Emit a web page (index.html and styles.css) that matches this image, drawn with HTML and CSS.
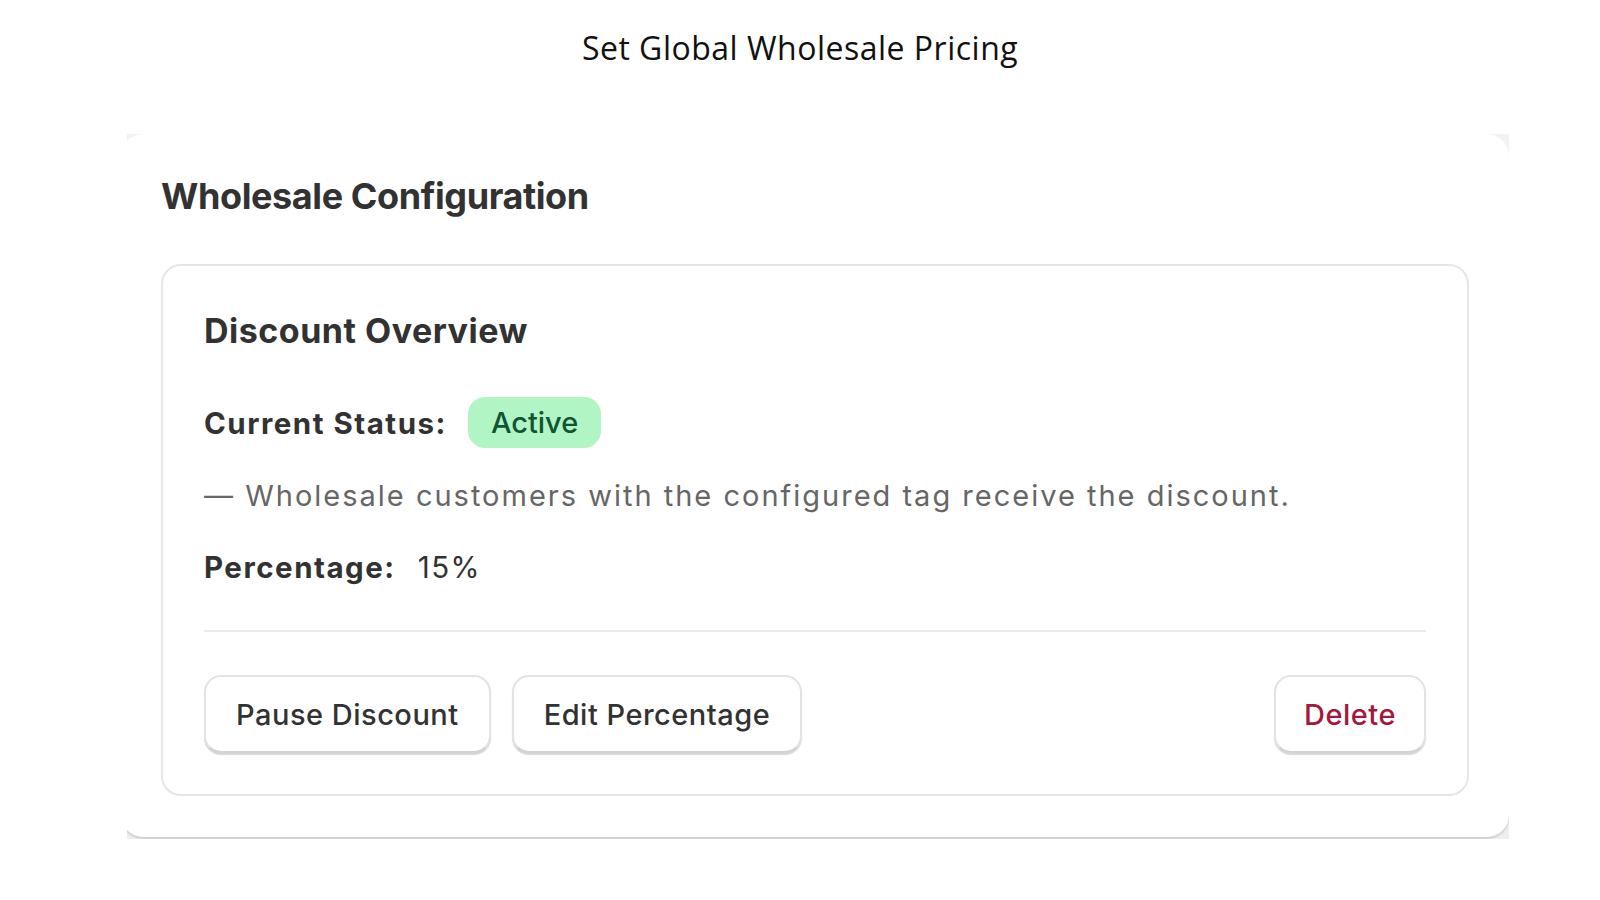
FILE: index.html
```html
<!DOCTYPE html>
<html>
<head>
<meta charset="utf-8">
<link rel="stylesheet" href="styles.css">
</head>
<body>
<div class="page">
  <h1 class="title">Set Global Wholesale Pricing</h1>
  <div class="shot">
    <div class="outer">
      <h2 class="outer-title">Wholesale Configuration</h2>
      <div class="inner">
        <h3 class="inner-title">Discount Overview</h3>
        <div class="row status-row">
          <span class="label">Current Status:</span>
          <span class="badge">Active</span>
        </div>
        <p class="desc">— Wholesale customers with the configured tag receive the discount.</p>
        <div class="row pct-row">
          <span class="label">Percentage:</span>
          <span class="value">15%</span>
        </div>
        <div class="divider"></div>
        <div class="actions">
          <div class="left-actions">
            <button class="btn">Pause Discount</button>
            <button class="btn">Edit Percentage</button>
          </div>
          <button class="btn btn-danger">Delete</button>
        </div>
      </div>
    </div>
  </div>
</div>
</body>
</html>
```

FILE: styles.css
```css
* { box-sizing: border-box; }
html, body { margin: 0; padding: 0; background: #ffffff; }
body { width: 1600px; height: 900px; overflow: hidden; }

.page {
  padding-top: 26px;
}

.title {
  margin: 0;
  text-align: center;
  font-family: "Open Sans", sans-serif;
  font-weight: 400;
  font-size: 32px;
  line-height: 44px;
  letter-spacing: 0.5px;
  color: #111;
}

.shot {
  margin: 64px 0 0 127px;
  width: 1382px;
  height: 705px;
  overflow: hidden;
  background: linear-gradient(#f2f2f2, #f2f2f2) top / 100% 24px no-repeat,
              linear-gradient(#eeeeee, #eeeeee) bottom / 100% 24px no-repeat,
              #ffffff;
}

.outer {
  margin-left: -6px;
  width: 1388px;
  background: #fff;
  border-radius: 22px;
  box-shadow: 0 2px 2px rgba(0,0,0,0.13);
  padding: 40px 40px 41px 40px;
  font-family: Inter, "Liberation Sans", sans-serif;
}

.outer-title {
  margin: 0;
  font-size: 36px;
  font-weight: 700;
  color: #323232;
  line-height: 44px;
  letter-spacing: -0.4px;
}

.inner {
  margin-top: 46px;
  border: 2px solid #e6e6e6;
  border-radius: 20px;
  padding: 44px 41px 41px 41px;
}

.inner-title {
  margin: 0;
  font-size: 34px;
  font-weight: 700;
  color: #323232;
  line-height: 42px;
  letter-spacing: 0.5px;
}

.row {
  display: flex;
  align-items: center;
}

.status-row { margin-top: 45px; gap: 21px; height: 51px; }

.label {
  font-size: 29.5px;
  font-weight: 700;
  color: #323232;
  line-height: 40px;
  letter-spacing: 1.5px;
}

.badge {
  background: #b2f5c4;
  color: #0f5534;
  font-size: 29px;
  font-weight: 500;
  padding: 0 23px;
  height: 51px;
  line-height: 51px;
  border-radius: 17px;
}

.desc {
  margin: 28px 0 0;
  font-size: 29px;
  color: #666666;
  line-height: 40px;
  letter-spacing: 2px;
  white-space: nowrap;
}

.pct-row { margin-top: 31px; gap: 22px; height: 40px; }

.value {
  font-size: 29.5px;
  color: #323232;
  line-height: 40px;
  letter-spacing: 1.5px;
}

.divider {
  margin-top: 43px;
  height: 2px;
  background: #ebebeb;
}

.actions {
  margin-top: 43px;
  display: flex;
  justify-content: space-between;
  align-items: center;
}

.left-actions { display: flex; gap: 21px; }

.btn {
  font-family: Inter, "Liberation Sans", sans-serif;
  font-size: 29px;
  font-weight: 500;
  color: #323232;
  background: #fff;
  border: 2px solid #e3e3e3;
  border-bottom-color: #d2d2d2;
  border-radius: 17px;
  height: 78px;
  padding: 0 30px;
  letter-spacing: 0.5px;
  box-shadow: 0 2px 1px rgba(0,0,0,0.16);
}

.btn-danger { color: #a3183c; padding: 0 28px; }
```
